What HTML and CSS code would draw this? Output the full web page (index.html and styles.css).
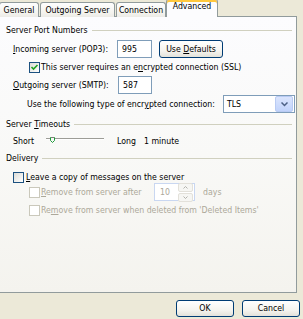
FILE: index.html
```html
<!DOCTYPE html>
<html>
<head>
<meta charset="UTF-8">
<link rel="stylesheet" href="styles.css">
</head>
<body>
<div class="dialog">
    <div class="tabs">
        <div class="tab t-general">General</div>
        <div class="tab t-outgoing">Outgoing Server</div>
        <div class="tab t-connection">Connection</div>
        <div class="tab t-advanced active">Advanced</div>
    </div>

    <div class="panel">
        <div class="group g-ports"><span>Server Port Numbers</span></div>

        <div class="row r-incoming">
            <span class="label w-incoming"><u>I</u>ncoming server (POP3):</span>
            <span class="field w-port">995</span>
            <span class="button defaults">Use <u>D</u>efaults</span>
        </div>

        <div class="row r-ssl indent">
            <span class="check checked">
                <svg width="9" height="9" viewBox="0 0 9 9"><path d="M1.5 4 L3.5 6 L7.5 2" fill="none" stroke="#21a121" stroke-width="1.6"/></svg>
            </span>
            <span class="text">This server requires an e<u>n</u>crypted connection (SSL)</span>
        </div>

        <div class="row r-outgoing">
            <span class="label w-outgoing"><u>O</u>utgoing server (SMTP):</span>
            <span class="field w-port2">587</span>
        </div>

        <div class="row r-encrypt">
            <span class="label w-encrypt">Use the following type of encr<u>y</u>pted connection:</span>
            <span class="select">
                <span class="value">TLS</span>
                <span class="drop">
                    <svg width="7" height="5" viewBox="0 0 7 5"><path d="M0.5 0.5 L3.5 3.5 L6.5 0.5" fill="none" stroke="#4d6185" stroke-width="1.5"/></svg>
                </span>
            </span>
        </div>

        <div class="group g-timeouts"><span>Server <u>T</u>imeouts</span></div>

        <div class="row r-timeout">
            <span class="label w-short">Short</span>
            <svg class="slider" width="62" height="12" viewBox="0 0 62 12">
                <line x1="2" y1="3.5" x2="60" y2="3.5" stroke="#9d9d97"/>
                <line x1="2" y1="4.5" x2="60" y2="4.5" stroke="#ffffff"/>
                <path d="M6.5 2.5 L6.5 5.5 L8.5 7.5 L10.5 5.5 L10.5 2.5 Z" fill="#f7f7f4" stroke="#1c9a3a"/>
                <path d="M7 2.5 L10 2.5" stroke="#7d7d76"/>
            </svg>
            <span class="label w-long">Long</span>
            <span class="text">1 minute</span>
        </div>

        <div class="group g-delivery"><span>Delivery</span></div>

        <div class="row r-leave">
            <span class="check"></span>
            <span class="text"><u>L</u>eave a copy of messages on the server</span>
        </div>

        <div class="row r-remove indent disabled">
            <span class="check"></span>
            <span class="text w-remove"><u>R</u>emove from server after</span>
            <span class="spin">
                <span class="value">10</span>
                <span class="arrows">
                    <span class="arrow">
                        <svg width="5" height="3" viewBox="0 0 5 3"><path d="M0.5 2.5 L2.5 0.5 L4.5 2.5" fill="none" stroke="#b3b3ad"/></svg>
                    </span>
                    <span class="arrow">
                        <svg width="5" height="3" viewBox="0 0 5 3"><path d="M0.5 0.5 L2.5 2.5 L4.5 0.5" fill="none" stroke="#b3b3ad"/></svg>
                    </span>
                </span>
            </span>
            <span class="text days">days</span>
        </div>

        <div class="row r-deleted indent disabled">
            <span class="check"></span>
            <span class="text">Re<u>m</u>ove from server when deleted from 'Deleted Items'</span>
        </div>
    </div>

    <div class="actions">
        <span class="button action">OK</span>
        <span class="button action">Cancel</span>
    </div>
</div>
</body>
</html>
```

FILE: styles.css
```css
body {
    margin: 0;
    background: #ece9d8;
    font-family: Tahoma, "DejaVu Sans Condensed", "Liberation Sans", sans-serif;
    font-size: 8.7px;
    color: #000;
}

.dialog {
    width: 303px;
    height: 319px;
    overflow: hidden;
}

u { text-decoration: underline; text-underline-offset: 1px; }

/* tabs */
.tabs {
    display: flex;
    align-items: flex-end;
    height: 17px;
    margin-left: -1px;
}
.tab {
    box-sizing: border-box;
    height: 15px;
    margin-right: 1px;
    border: 1px solid #919b9c;
    border-bottom: none;
    border-radius: 3px 3px 0 0;
    background: linear-gradient(#fefefe, #f4f3ee 70%, #ecebe6);
    text-align: center;
    line-height: 14px;
}
.t-general    { width: 40px; }
.t-outgoing   { width: 75px; }
.t-connection { width: 50px; }
.t-advanced   { width: 52px; }

.tab.active {
    position: relative;
    z-index: 1;
    height: 18px;
    margin-left: -1px;
    border-top: 1px solid #e68b2c;
    box-shadow: inset 0 2px 0 #ffc83c;
    background: #fcfcfe;
    line-height: 13px;
}

/* panel */
.panel {
    box-sizing: border-box;
    width: 298px;
    height: 277px;
    margin-top: -1px;
    margin-left: -1px;
    padding-left: 1px;
    padding-top: 6px;
    border: 1px solid #919b9c;
    background: linear-gradient(#fcfcfe, #f9f9f7 50%, #f4f3ee);
}

.group {
    display: flex;
    align-items: center;
    height: 14px;
    padding-left: 5px;
    padding-right: 4px;
}
.group::after {
    content: "";
    flex: 1;
    height: 1px;
    margin-left: 4px;
    background: #d0d0bf;
}
.g-timeouts { margin-top: 4px; }
.g-delivery { margin-top: 3px; }

.row {
    display: flex;
    align-items: center;
    height: 18px;
    padding-left: 12px;
}
.row.indent { padding-left: 28px; }

.r-incoming { margin-top: 3px; }
.r-encrypt  { margin-top: 1px; padding-left: 26px; }
.r-timeout  { height: 14px; margin-top: 3px; }
.r-leave    { height: 12px; margin-top: 6px; }
.r-deleted  { height: 14px; margin-top: 2px; }

.label { flex: none; white-space: nowrap; }
.w-incoming { width: 104px; }
.w-outgoing { width: 105px; }
.w-encrypt  { width: 196px; }
.w-short    { width: 31px; }
.w-long     { width: 27px; margin-left: 11px; }
.w-remove   { width: 113px; }

.text { white-space: nowrap; }

.field {
    box-sizing: border-box;
    height: 18px;
    padding-left: 4px;
    border: 1px solid #7f9db9;
    background: #fff;
    line-height: 16px;
}
.w-port  { width: 35px; }
.w-port2 { width: 34px; }

.button {
    box-sizing: border-box;
    border: 1px solid #003c74;
    border-radius: 3px;
    background: linear-gradient(#ffffff, #f5f4ef 60%, #e3e2da);
    text-align: center;
}
.defaults {
    width: 64px;
    height: 18px;
    margin-left: 7px;
    line-height: 16px;
}

.check {
    box-sizing: border-box;
    display: flex;
    align-items: center;
    justify-content: center;
    width: 11px;
    height: 11px;
    margin-right: 1px;
    border: 1px solid #1c5180;
    background: linear-gradient(135deg, #dcdcd7, #ffffff);
}
.r-leave .check { margin-right: 2px; }

.select {
    box-sizing: border-box;
    display: flex;
    align-items: center;
    width: 72px;
    height: 18px;
    border: 1px solid #7f9db9;
    background: #fff;
}
.select .value { flex: 1; padding-left: 3px; }
.drop {
    display: flex;
    align-items: center;
    justify-content: center;
    width: 16px;
    height: 14px;
    margin-right: 1px;
    border: 1px solid #b9cbf3;
    border-radius: 2px;
    background: linear-gradient(#dbe5fd, #c1d3fb);
}

.slider { flex: none; }

/* disabled controls */
.disabled { color: #aca899; }
.disabled .check {
    border-color: #cac8bb;
    background: #fff;
}
.spin {
    box-sizing: border-box;
    display: flex;
    align-items: center;
    width: 41px;
    height: 18px;
    border: 1px solid #c9d7f1;
    background: #fff;
}
.spin .value { flex: 1; padding-left: 5px; }
.arrows {
    display: flex;
    flex-direction: column;
    gap: 1px;
    margin-right: 1px;
}
.arrow {
    display: flex;
    align-items: center;
    justify-content: center;
    width: 13px;
    height: 7px;
    border: 1px solid #e3e1da;
    border-radius: 2px;
    background: #f6f6f3;
}
.days { margin-left: 8px; }

/* bottom buttons */
.actions {
    display: flex;
    justify-content: flex-end;
    gap: 8px;
    padding-top: 7px;
    padding-right: 3px;
}
.action {
    width: 58px;
    height: 17px;
    line-height: 15px;
}
```
